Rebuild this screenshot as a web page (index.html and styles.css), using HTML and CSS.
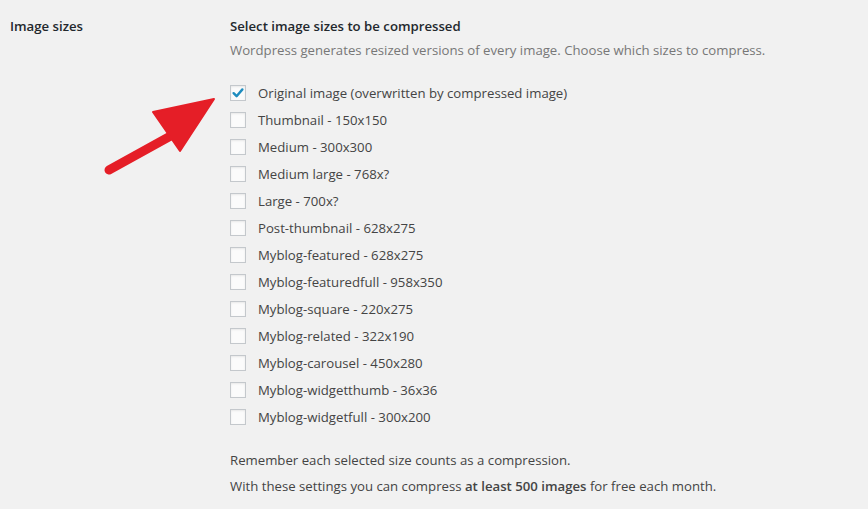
FILE: index.html
```html
<!DOCTYPE html>
<html>
<head>
<meta charset="utf-8">
<link rel="stylesheet" href="styles.css">
</head>
<body>
<div class="setting">
  <div class="label">Image sizes</div>
  <div class="field">
    <div class="title">Select image sizes to be compressed</div>
    <p class="desc">Wordpress generates resized versions of every image. Choose which sizes to compress.</p>
    <ul class="sizes">
      <li><span class="box checked"><svg viewBox="0 0 16 16" width="16" height="16"><path d="M3.6 8.2 L6.6 11.2 L12.4 4.4" fill="none" stroke="#1e8cbe" stroke-width="2.4" stroke-linecap="round" stroke-linejoin="round"/></svg></span>Original image (overwritten by compressed image)</li>
      <li><span class="box"></span>Thumbnail - 150x150</li>
      <li><span class="box"></span>Medium - 300x300</li>
      <li><span class="box"></span>Medium large - 768x?</li>
      <li><span class="box"></span>Large - 700x?</li>
      <li><span class="box"></span>Post-thumbnail - 628x275</li>
      <li><span class="box"></span>Myblog-featured - 628x275</li>
      <li><span class="box"></span>Myblog-featuredfull - 958x350</li>
      <li><span class="box"></span>Myblog-square - 220x275</li>
      <li><span class="box"></span>Myblog-related - 322x190</li>
      <li><span class="box"></span>Myblog-carousel - 450x280</li>
      <li><span class="box"></span>Myblog-widgetthumb - 36x36</li>
      <li><span class="box"></span>Myblog-widgetfull - 300x200</li>
    </ul>
    <p class="note">Remember each selected size counts as a compression.</p>
    <p class="note">With these settings you can compress <strong>at least 500 images</strong> for free each month.</p>
  </div>
</div>
<svg class="arrow" width="868" height="509" viewBox="0 0 868 509">
  <line x1="109" y1="170" x2="185" y2="128" stroke="#e51e27" stroke-width="9" stroke-linecap="round"/>
  <polygon points="214,99 153,112 180,151" fill="#e51e27" stroke="#e51e27" stroke-width="2" stroke-linejoin="round"/>
</svg>
</body>
</html>
```
FILE: styles.css
```css
html, body {
  margin: 0;
  padding: 0;
  background: #f1f1f1;
  width: 868px;
  height: 509px;
  overflow: hidden;
  font-family: "Open Sans", "Noto Sans", sans-serif;
  font-size: 13.2px;
  color: #444;
}
.setting {
  display: flex;
  padding: 17px 0 0 10px;
}
.label {
  width: 220px;
  font-weight: 600;
  color: #23282d;
  line-height: 18px;
}
.field {
  flex: 1;
}
.title {
  font-weight: 600;
  color: #23282d;
  line-height: 18px;
}
.desc {
  margin: 6px 0 0;
  color: #777;
  line-height: 18px;
}
.sizes {
  list-style: none;
  margin: 25px 0 0;
  padding: 0;
  display: flex;
  flex-direction: column;
  gap: 9px;
}
.sizes li {
  display: flex;
  align-items: center;
  height: 18px;
  color: #444;
}
.box {
  width: 14px;
  height: 14px;
  border: 1px solid #c4c8cc;
  background: #fbfbfb;
  box-shadow: inset 0 1px 2px rgba(0,0,0,0.08);
  margin-right: 12px;
  position: relative;
  flex: none;
}
.box svg {
  position: absolute;
  left: -1px;
  top: -1px;
}
.note {
  margin: 0;
  line-height: 26px;
  color: #444;
}
.sizes + .note {
  margin-top: 21px;
}
.note strong {
  font-weight: 600;
}
.arrow {
  position: absolute;
  left: 0;
  top: 0;
  pointer-events: none;
}
```
